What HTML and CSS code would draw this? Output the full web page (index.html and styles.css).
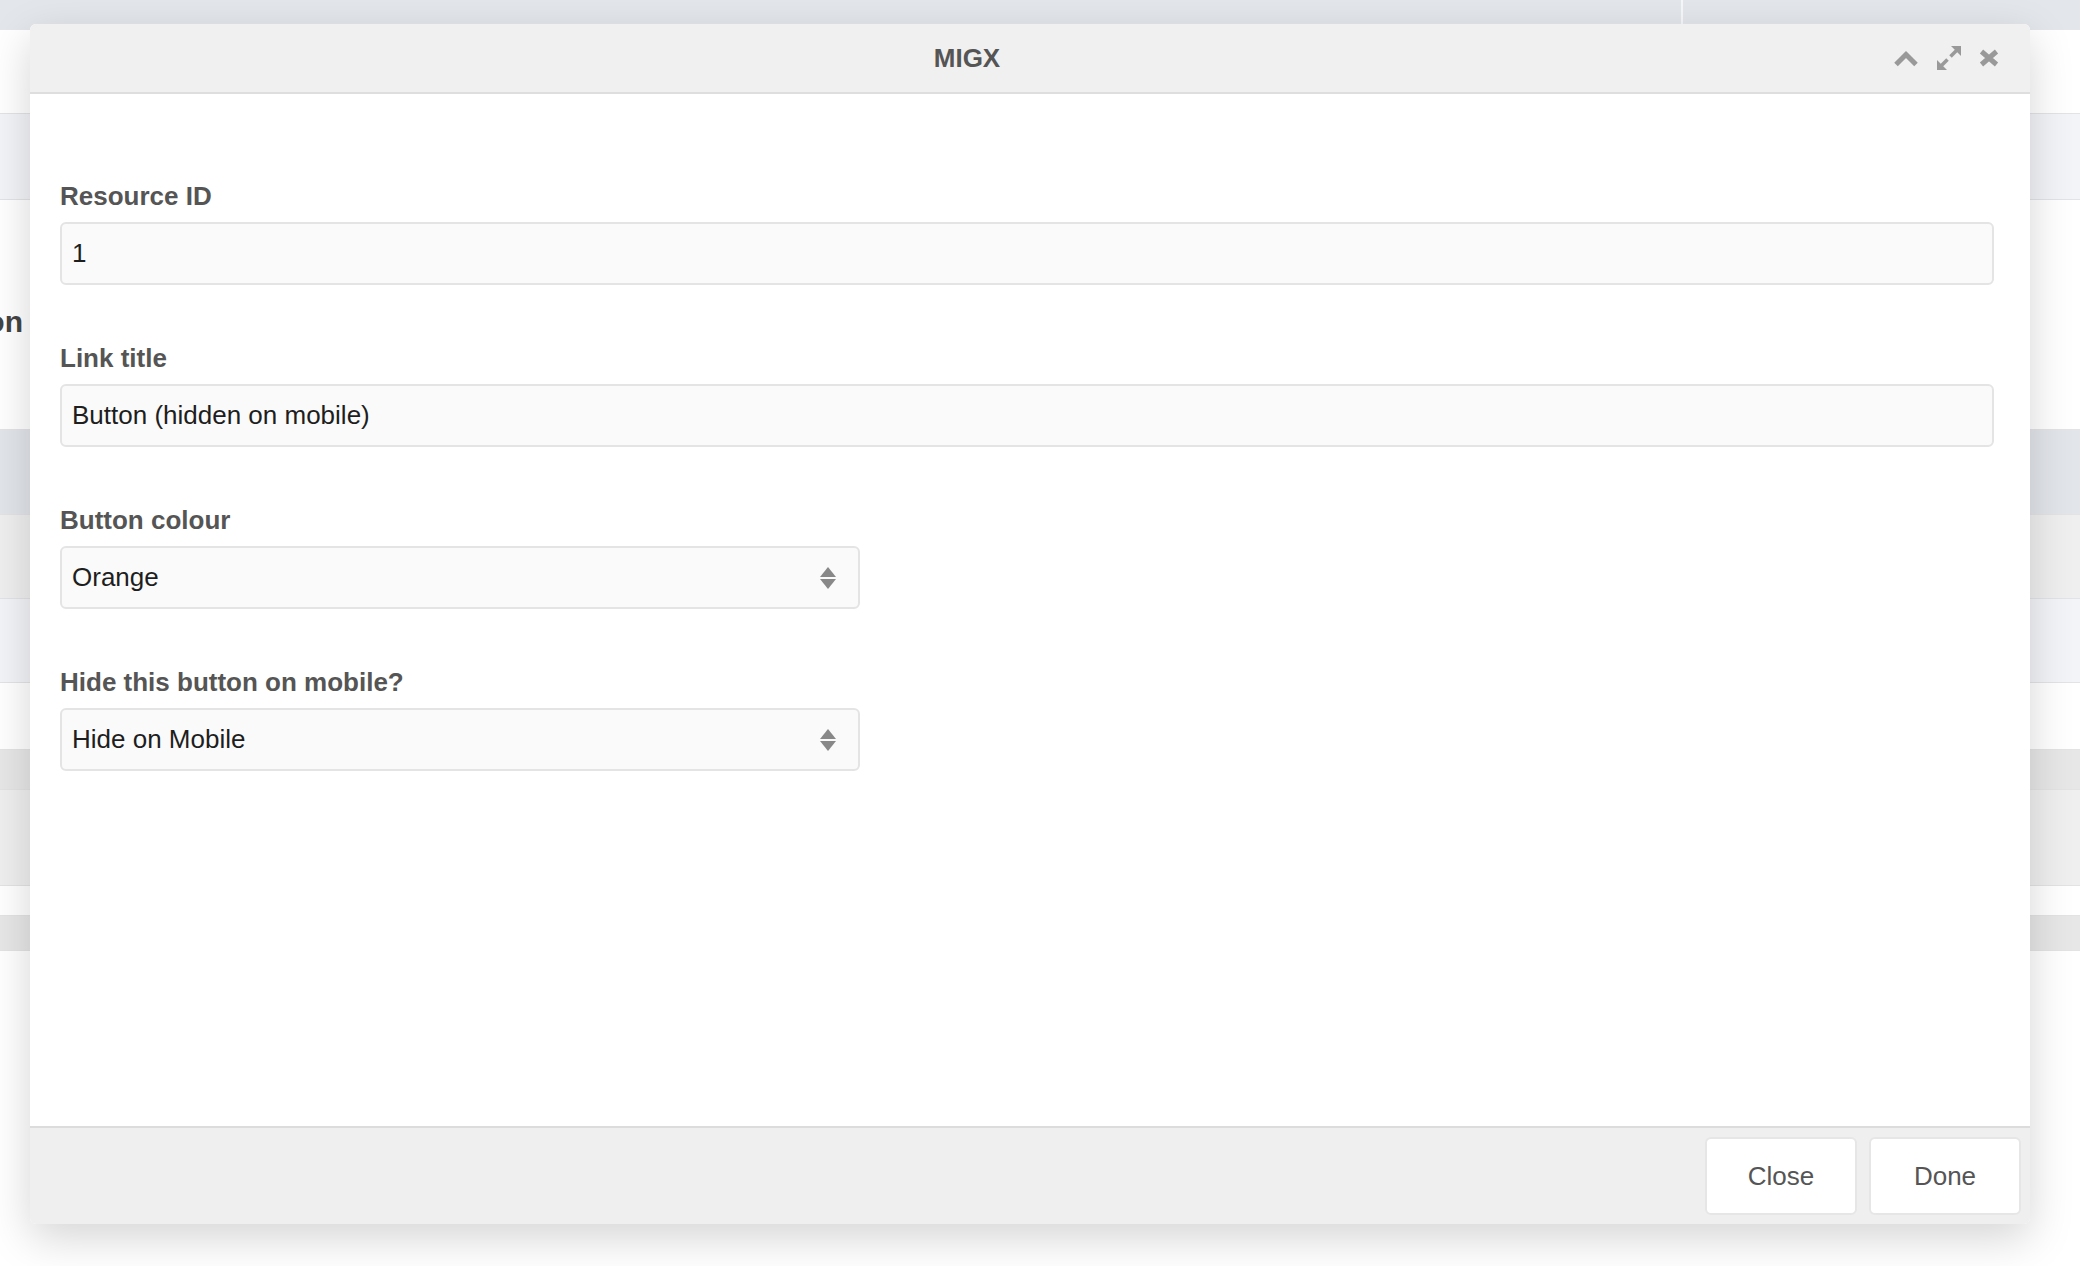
FILE: index.html
```html
<!DOCTYPE html>
<html lang="en">
<head>
    <meta charset="UTF-8">
    <meta name="viewport" content="width=device-width, initial-scale=1.0">
    <title>MIGX</title>
    <link rel="stylesheet" href="styles.css">
</head>
<body>
    <!-- manager page behind the window -->
    <div class="page">
        <div class="topbar"><div class="topbar-split"></div></div>
        <div class="row row-white h84"></div>
        <div class="row row-blue h86"></div>
        <div class="row row-white h230">
            <div class="cut-text">Position</div>
        </div>
        <div class="row row-steel h85"></div>
        <div class="row row-grey h84"></div>
        <div class="row row-blue h84"></div>
        <div class="row row-white h67"></div>
        <div class="row row-grey2 h40"></div>
        <div class="row row-grey h96"></div>
        <div class="row row-white h30"></div>
        <div class="row row-grey2 h35"></div>
    </div>

    <div class="window">
        <div class="window-header">
            <div class="window-title">MIGX</div>
            <div class="window-tools">
                <svg class="tool" width="26" height="18" viewBox="0 0 26 18">
                    <path d="M3 15.5 L13 5.5 L23 15.5" fill="none" stroke="#999" stroke-width="5"/>
                </svg>
                <svg class="tool" width="24" height="24" viewBox="0 0 24 24">
                    <polygon points="14,0 24,0 24,10" fill="#999"/>
                    <line x1="20" y1="4" x2="13.5" y2="10.5" stroke="#999" stroke-width="3.6"/>
                    <polygon points="0,14 0,24 10,24" fill="#999"/>
                    <line x1="4" y1="20" x2="10.5" y2="13.5" stroke="#999" stroke-width="3.6"/>
                </svg>
                <svg class="tool" width="20" height="18" viewBox="0 0 20 18">
                    <path d="M2.5 2.5 L17.5 15.5 M17.5 2.5 L2.5 15.5" fill="none" stroke="#999" stroke-width="5"/>
                </svg>
            </div>
        </div>

        <div class="window-body">
            <div class="field">
                <label class="field-label">Resource ID</label>
                <div class="field-input">1</div>
            </div>
            <div class="field">
                <label class="field-label">Link title</label>
                <div class="field-input">Button (hidden on mobile)</div>
            </div>
            <div class="field">
                <label class="field-label">Button colour</label>
                <div class="field-input field-select">
                    <span>Orange</span>
                    <svg width="16" height="22" viewBox="0 0 16 22">
                        <polygon points="0,10 8,0 16,10" fill="#888"/>
                        <polygon points="0,12 16,12 8,22" fill="#888"/>
                    </svg>
                </div>
            </div>
            <div class="field">
                <label class="field-label">Hide this button on mobile?</label>
                <div class="field-input field-select">
                    <span>Hide on Mobile</span>
                    <svg width="16" height="22" viewBox="0 0 16 22">
                        <polygon points="0,10 8,0 16,10" fill="#888"/>
                        <polygon points="0,12 16,12 8,22" fill="#888"/>
                    </svg>
                </div>
            </div>
        </div>

        <div class="window-footer">
            <button class="btn">Close</button>
            <button class="btn">Done</button>
        </div>
    </div>
</body>
</html>
```

FILE: styles.css
```css
body, html {
    margin: 0;
    padding: 0;
    width: 2080px;
    height: 1266px;
    overflow: hidden;
    background-color: #fff;
    font-family: "Liberation Sans", Arial, sans-serif;
}

body {
    position: relative;
}

/* background manager page */
.page {
    display: flex;
    flex-direction: column;
}

.topbar {
    height: 30px;
    background-color: #e3e6eb;
    position: relative;
}

.topbar-split {
    position: absolute;
    left: 1681px;
    top: 0;
    bottom: 0;
    width: 2px;
    background-color: #f6f7f9;
}

.row {
    border-bottom: 1px solid #e3e3e6;
    box-sizing: border-box;
    position: relative;
}

.row-white { background-color: #fff; }
.row-blue { background-color: #f3f4f8; }
.row-steel { background-color: #e2e5ea; }
.row-grey { background-color: #efefef; }
.row-grey2 { background-color: #e7e7e7; }

.h30 { height: 30px; }
.h35 { height: 35px; }
.h40 { height: 40px; }
.h67 { height: 67px; }
.h84 { height: 84px; }
.h85 { height: 85px; }
.h86 { height: 86px; }
.h96 { height: 96px; }
.h230 { height: 230px; }

/* row label mostly hidden under the window */
.cut-text {
    width: 23px;
    margin-top: 105px;
    display: flex;
    justify-content: flex-end;
    overflow: hidden;
    white-space: nowrap;
    font-size: 30px;
    font-weight: bold;
    color: #444;
}

/* modal window */
.window {
    position: absolute;
    left: 30px;
    top: 24px;
    width: 2000px;
    height: 1200px;
    display: flex;
    flex-direction: column;
    background-color: #fff;
    border-radius: 6px;
    box-shadow: 0 14px 44px rgba(0, 0, 0, 0.17);
    overflow: hidden;
}

.window-header {
    height: 68px;
    display: flex;
    align-items: center;
    background-color: #f0f0f0;
    border-bottom: 2px solid #dedede;
    flex-shrink: 0;
}

.window-title {
    flex: 1;
    padding-left: 24px;
    text-align: center;
    font-size: 26px;
    font-weight: bold;
    color: #555;
}

.window-tools {
    width: 150px;
    display: flex;
    align-items: center;
    gap: 18px;
    padding-left: 13px;
    box-sizing: border-box;
}

.tool {
    display: block;
}

.window-body {
    flex: 1;
    padding: 86px 36px 0 30px;
}

.field {
    margin-bottom: 57px;
}

.field-label {
    display: block;
    height: 32px;
    line-height: 32px;
    margin-bottom: 10px;
    font-size: 26px;
    font-weight: bold;
    color: #555;
}

.field-input {
    height: 63px;
    box-sizing: border-box;
    display: flex;
    align-items: center;
    padding: 0 10px;
    background-color: #fafafa;
    border: 2px solid #e4e4e4;
    border-radius: 6px;
    font-size: 26px;
    color: #1e1e1e;
}

.field-select {
    width: 800px;
    justify-content: space-between;
    padding-right: 22px;
}

.field-select svg {
    display: block;
}

.window-footer {
    height: 96px;
    flex-shrink: 0;
    display: flex;
    justify-content: flex-end;
    align-items: center;
    gap: 12px;
    padding-right: 9px;
    background-color: #efefef;
    border-top: 2px solid #dcdcdc;
}

.btn {
    width: 152px;
    height: 78px;
    background-color: #fff;
    border: 2px solid #e6e6e6;
    border-radius: 6px;
    font-family: "Liberation Sans", Arial, sans-serif;
    font-size: 26px;
    color: #555;
    padding: 0;
}
```
